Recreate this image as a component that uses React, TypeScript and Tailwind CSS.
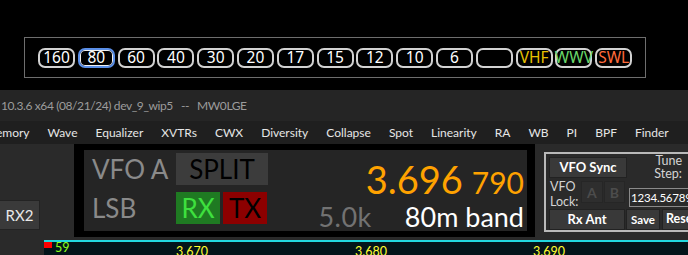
import React from "react";

const bands = [
  { label: "160" },
  { label: "80", active: true },
  { label: "60" },
  { label: "40" },
  { label: "30" },
  { label: "20" },
  { label: "17" },
  { label: "15" },
  { label: "12" },
  { label: "10" },
  { label: "6" },
  { label: "" },
  { label: "VHF", color: "text-[#e8c000]" },
  { label: "WWV", color: "text-[#6ad66a]" },
  { label: "SWL", color: "text-[#ff6a3a]" },
];

const menu = [
  "Memory",
  "Wave",
  "Equalizer",
  "XVTRs",
  "CWX",
  "Diversity",
  "Collapse",
  "Spot",
  "Linearity",
  "RA",
  "WB",
  "PI",
  "BPF",
  "Finder",
];

const font = { fontFamily: 'Lato, "Noto Sans", sans-serif' };
const noto = { fontFamily: '"Noto Sans", "Open Sans", sans-serif' };

export default function App() {
  return (
    <div className="w-[688px] h-[255px] overflow-hidden bg-[#2a2a2a] flex flex-col" style={font}>
      {/* Band selector strip */}
      <div className="h-[90px] bg-black pt-[37px] pl-[24px] shrink-0">
        <div className="w-[622px] h-[41px] border border-[#6e6e6e] flex items-center pl-[13px] gap-[2.8px]" style={noto}>
          {bands.map((b, i) => (
            <div
              key={i}
              className={`w-[37px] h-[20px] rounded-[7px] border-2 flex items-center justify-center text-[15.5px] leading-none ${
                b.active
                  ? "border-[#5a8ee6] shadow-[inset_0_0_0_1px_#f0f0f0]"
                  : "border-[#d2d2d2]"
              } ${b.color ?? "text-white"}`}
            >
              {b.label}
            </div>
          ))}
        </div>
      </div>

      {/* Title bar */}
      <div className="h-[31px] bg-[#252525] flex items-center shrink-0 text-[12px] tracking-[-0.4px] text-[#9c9c9c] whitespace-pre pl-[1px]">
        10.3.6 x64 (08/21/24) dev_9_wip5   --   MW0LGE
      </div>

      {/* Menu bar */}
      <div className="h-[23px] bg-[#1f1f1f] flex items-center gap-[18px] shrink-0 text-[12px] text-[#e6e6e6] whitespace-nowrap -ml-[15px]">
        {menu.map((m) => (
          <span key={m}>{m}</span>
        ))}
      </div>

      {/* Main area */}
      <div className="h-[96px] flex shrink-0">
        <div className="w-[74px] shrink-0 pt-[56px]">
          <div className="w-[40px] h-[30px] bg-[#3a3a3a] border border-[#232323] border-l-0 flex items-center justify-center text-[15px] text-[#e8e8e8]">
            RX2
          </div>
        </div>

        {/* VFO display */}
        <div className="w-[461px] h-[93px] bg-black pl-[10px] pr-[8px] pt-[6px] pb-[6px] shrink-0">
          <div className="h-full bg-[#252525] flex">
            <div className="w-[92px] flex flex-col pl-[8px] pt-[3px] text-[26px] leading-none text-[#8a8a8a]">
              <div className="h-[32px] flex items-center">VFO A</div>
              <div className="h-[32px] mt-[7px] flex items-center">LSB</div>
            </div>
            <div className="flex flex-col pt-[3px] text-[26px] leading-none">
              <div className="w-[92px] h-[32px] bg-[#3c3c3c] flex items-center justify-center text-black">SPLIT</div>
              <div className="flex gap-[3px] mt-[7px]">
                <div className="w-[44px] h-[32px] bg-[#1f7a22] flex items-center justify-center text-[#3ee03e]">RX</div>
                <div className="w-[44px] h-[32px] bg-[#8c0000] flex items-center justify-center text-black">TX</div>
              </div>
            </div>
            <div className="flex-1 flex flex-col items-end pr-[3px]">
              <div className="flex items-baseline text-[#ffa200] leading-none mt-[10px]">
                <span className="text-[38px]">3.696</span>
                <span className="text-[30px] ml-[9px]">790</span>
              </div>
              <div className="flex items-baseline leading-none mt-[5px] text-[27px]">
                <span className="text-[#727272] tracking-[0.5px]">5.0k</span>
                <span className="text-white ml-[33px]">80m band</span>
              </div>
            </div>
          </div>
        </div>

        {/* VFO controls group */}
        <div className="ml-[9px] pt-[8px] shrink-0">
          <div className="w-[160px] h-[80px] border-2 border-[#b9b9b9] flex text-[12px]">
            <div className="w-[79px] pl-[3px] pt-[3px] flex flex-col">
              <div className="w-[78px] h-[21px] bg-[#393939] border border-[#222] flex items-center justify-center font-bold text-white text-[13px]">
                VFO Sync
              </div>
              <div className="flex items-start mt-[3px] h-[26px]">
                <div className="w-[33px] leading-[15px] -mt-[2px] text-[#d4d4d4] pl-[1px] text-[12.5px]">
                  VFO
                  <br />
                  Lock:
                </div>
                <div className="w-[22px] h-[22px] bg-[#2e2e2e] border border-[#262626] flex items-center justify-center font-bold text-[#4c4c4c] text-[14px]">A</div>
                <div className="w-[22px] h-[22px] ml-[1px] bg-[#2e2e2e] border border-[#262626] flex items-center justify-center font-bold text-[#4c4c4c] text-[14px]">B</div>
              </div>
              <div className="w-[76px] h-[21px] mt-[2px] bg-[#393939] border border-[#222] flex items-center justify-center font-bold text-white text-[13px]">
                Rx Ant
              </div>
            </div>
            <div className="flex-1 flex flex-col">
              <div className="h-[34px] w-[57px] leading-[13px] text-[#d4d4d4] text-right text-[12.5px]">
                Tune
                <br />
                Step:
              </div>
              <div className="ml-[4px] h-[19px] border border-[#8a8a8a] bg-[#2a2a2a] text-white flex items-center pl-[1px] whitespace-nowrap overflow-hidden text-[11.5px] tracking-[-0.2px]">
                1234.56789
              </div>
              <div className="flex gap-[2px] mt-[2px] ml-[1px]">
                <div className="w-[34px] h-[21px] bg-[#393939] border border-[#222] flex items-center justify-center font-bold text-white text-[11.5px]">Save</div>
                <div className="w-[40px] h-[21px] bg-[#393939] border border-[#222] flex items-center pl-[3px] font-bold text-white text-[12.5px]">Reset</div>
              </div>
            </div>
          </div>
        </div>
      </div>

      {/* Spectrum */}
      <div className="flex-1 flex pl-[44px]">
        <div className="flex-1 relative bg-[#03141a] border-t-2 border-[#22d8e0] overflow-hidden">
          <div className="absolute left-0 -top-[2px] w-[8px] h-[8px] bg-[#ff0000]" />
          <span className="absolute left-[11px] top-[0px] text-[12.5px] leading-none text-[#8cff1a]">59</span>
          <span className="absolute left-[132px] top-[4px] text-[12.5px] leading-none text-[#ffff30]">3.670</span>
          <span className="absolute left-[311px] top-[4px] text-[12.5px] leading-none text-[#ffff30]">3.680</span>
          <span className="absolute left-[489px] top-[4px] text-[12.5px] leading-none text-[#ffff30]">3.690</span>
        </div>
      </div>
    </div>
  );
}
